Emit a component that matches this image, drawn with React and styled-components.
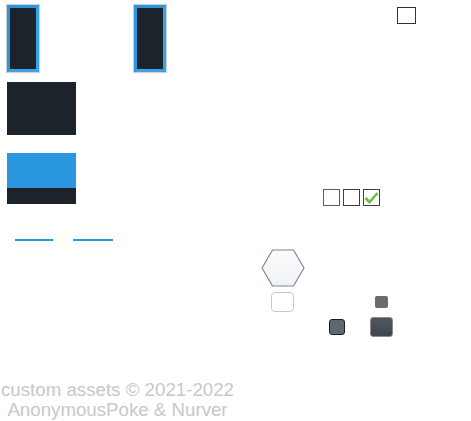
import React from 'react';
import styled, {createGlobalStyle} from 'styled-components';

const GlobalStyle = createGlobalStyle`
    html, body {
        margin: 0;
        padding: 0;
        background: #fff;
    }
`

// sprite sheet: every asset sits at its own spot on the sheet
const Sheet = styled.div`
    position: relative;
    width: 471px;
    height: 421px;
    overflow: hidden;
    font-family: "Liberation Sans", Arial, sans-serif;
`

const Sprite = styled.div`
    position: absolute;
    left: ${p => p.x}px;
    top: ${p => p.y}px;
`

const Slot = styled.div`
    box-sizing: border-box;
    width: 32px;
    height: 67px;
    border: 3px solid #2b96dc;
    border-right-color: #3aa3e6;
    border-bottom-color: #3aa3e6;
    background: #1d232a;
    box-shadow: 0 0 1px 1px rgba(0, 0, 0, 0.18);
`

const Panel = styled.div`
    width: 69px;
    height: 53px;
    background: #1d232a;
`

const Bar = styled.div`
    display: flex;
    flex-direction: column;
    width: 69px;
    height: 51px;
    background: #1d232a;
    div {
        height: 35px;
        background: #2a96dd;
    }
`

const Underlines = styled.div`
    display: flex;
    gap: 20px;
`

const Underline = styled.div`
    width: ${p => p.w}px;
    height: 2px;
    background: #2a96dd;
`

const Box = styled.div`
    box-sizing: border-box;
    width: ${p => p.w || 17}px;
    height: ${p => p.h || 17}px;
    border: 1px solid ${p => p.edge || '#3c3f44'};
    background: #fff;
    display: flex;
    align-items: center;
    justify-content: center;
`

const Checks = styled.div`
    display: flex;
    gap: 3px;
`

const Rounded = styled.div`
    box-sizing: border-box;
    width: ${p => p.w}px;
    height: ${p => p.h}px;
    border-radius: ${p => p.r || 3}px;
    border: ${p => p.edge ? `1px solid ${p.edge}` : 'none'};
    background: ${p => p.fill};
`

const Credits = styled.div`
    width: 235px;
    text-align: center;
    font-size: 18.7px;
    line-height: 20px;
    color: #c8c8c8;
`

function Check() {
    return (
        <svg width="15" height="13" viewBox="0 0 15 13">
            <path d="M1.5 7 L5.5 11 L13.5 2" fill="none" stroke="#6abf3c" strokeWidth="2.6" />
        </svg>
    );
}

function Hexagon() {
    return (
        <svg width="44" height="38" viewBox="0 0 44 38">
            <defs>
                <linearGradient id="hexFill" x1="0" y1="0" x2="0" y2="1">
                    <stop offset="0" stopColor="#fbfbfc" />
                    <stop offset="1" stopColor="#f1f2f5" />
                </linearGradient>
            </defs>
            <path d="M11.5 1 H32.5 L43 19 L32.5 37 H11.5 L1 19 Z"
                  fill="url(#hexFill)" stroke="#7d879a" strokeWidth="1.2" />
        </svg>
    );
}

export default function App() {
    return (
        <>
            <GlobalStyle />
            <Sheet>
                <Sprite x={7} y={5}><Slot /></Sprite>
                <Sprite x={134} y={5}><Slot /></Sprite>
                <Sprite x={7} y={82}><Panel /></Sprite>
                <Sprite x={7} y={153}><Bar><div /></Bar></Sprite>
                <Sprite x={15} y={239}>
                    <Underlines>
                        <Underline w={38} />
                        <Underline w={40} />
                    </Underlines>
                </Sprite>

                <Sprite x={397} y={7}><Box w={19} h={17} edge="#2f3337" /></Sprite>

                <Sprite x={323} y={189}>
                    <Checks>
                        <Box edge="#585d62" />
                        <Box />
                        <Box><Check /></Box>
                    </Checks>
                </Sprite>

                <Sprite x={261} y={249}><Hexagon /></Sprite>
                <Sprite x={271} y={292}><Rounded w={23} h={20} r={4} edge="#c9c9c9" fill="#fff" /></Sprite>
                <Sprite x={375} y={296}><Rounded w={13} h={12} r={2} fill="#6b6b6b" /></Sprite>
                <Sprite x={329} y={319}><Rounded w={16} h={16} r={3} edge="#1b1d20" fill="#5e6873" /></Sprite>
                <Sprite x={370} y={317}>
                    <Rounded w={23} h={20} r={3} edge="#8a8a8a" fill="linear-gradient(#50575e, #40464c)" />
                </Sprite>

                <Sprite x={0} y={380}>
                    <Credits>
                        custom assets © 2021-2022<br />
                        AnonymousPoke &amp; Nurver
                    </Credits>
                </Sprite>
            </Sheet>
        </>
    );
}
